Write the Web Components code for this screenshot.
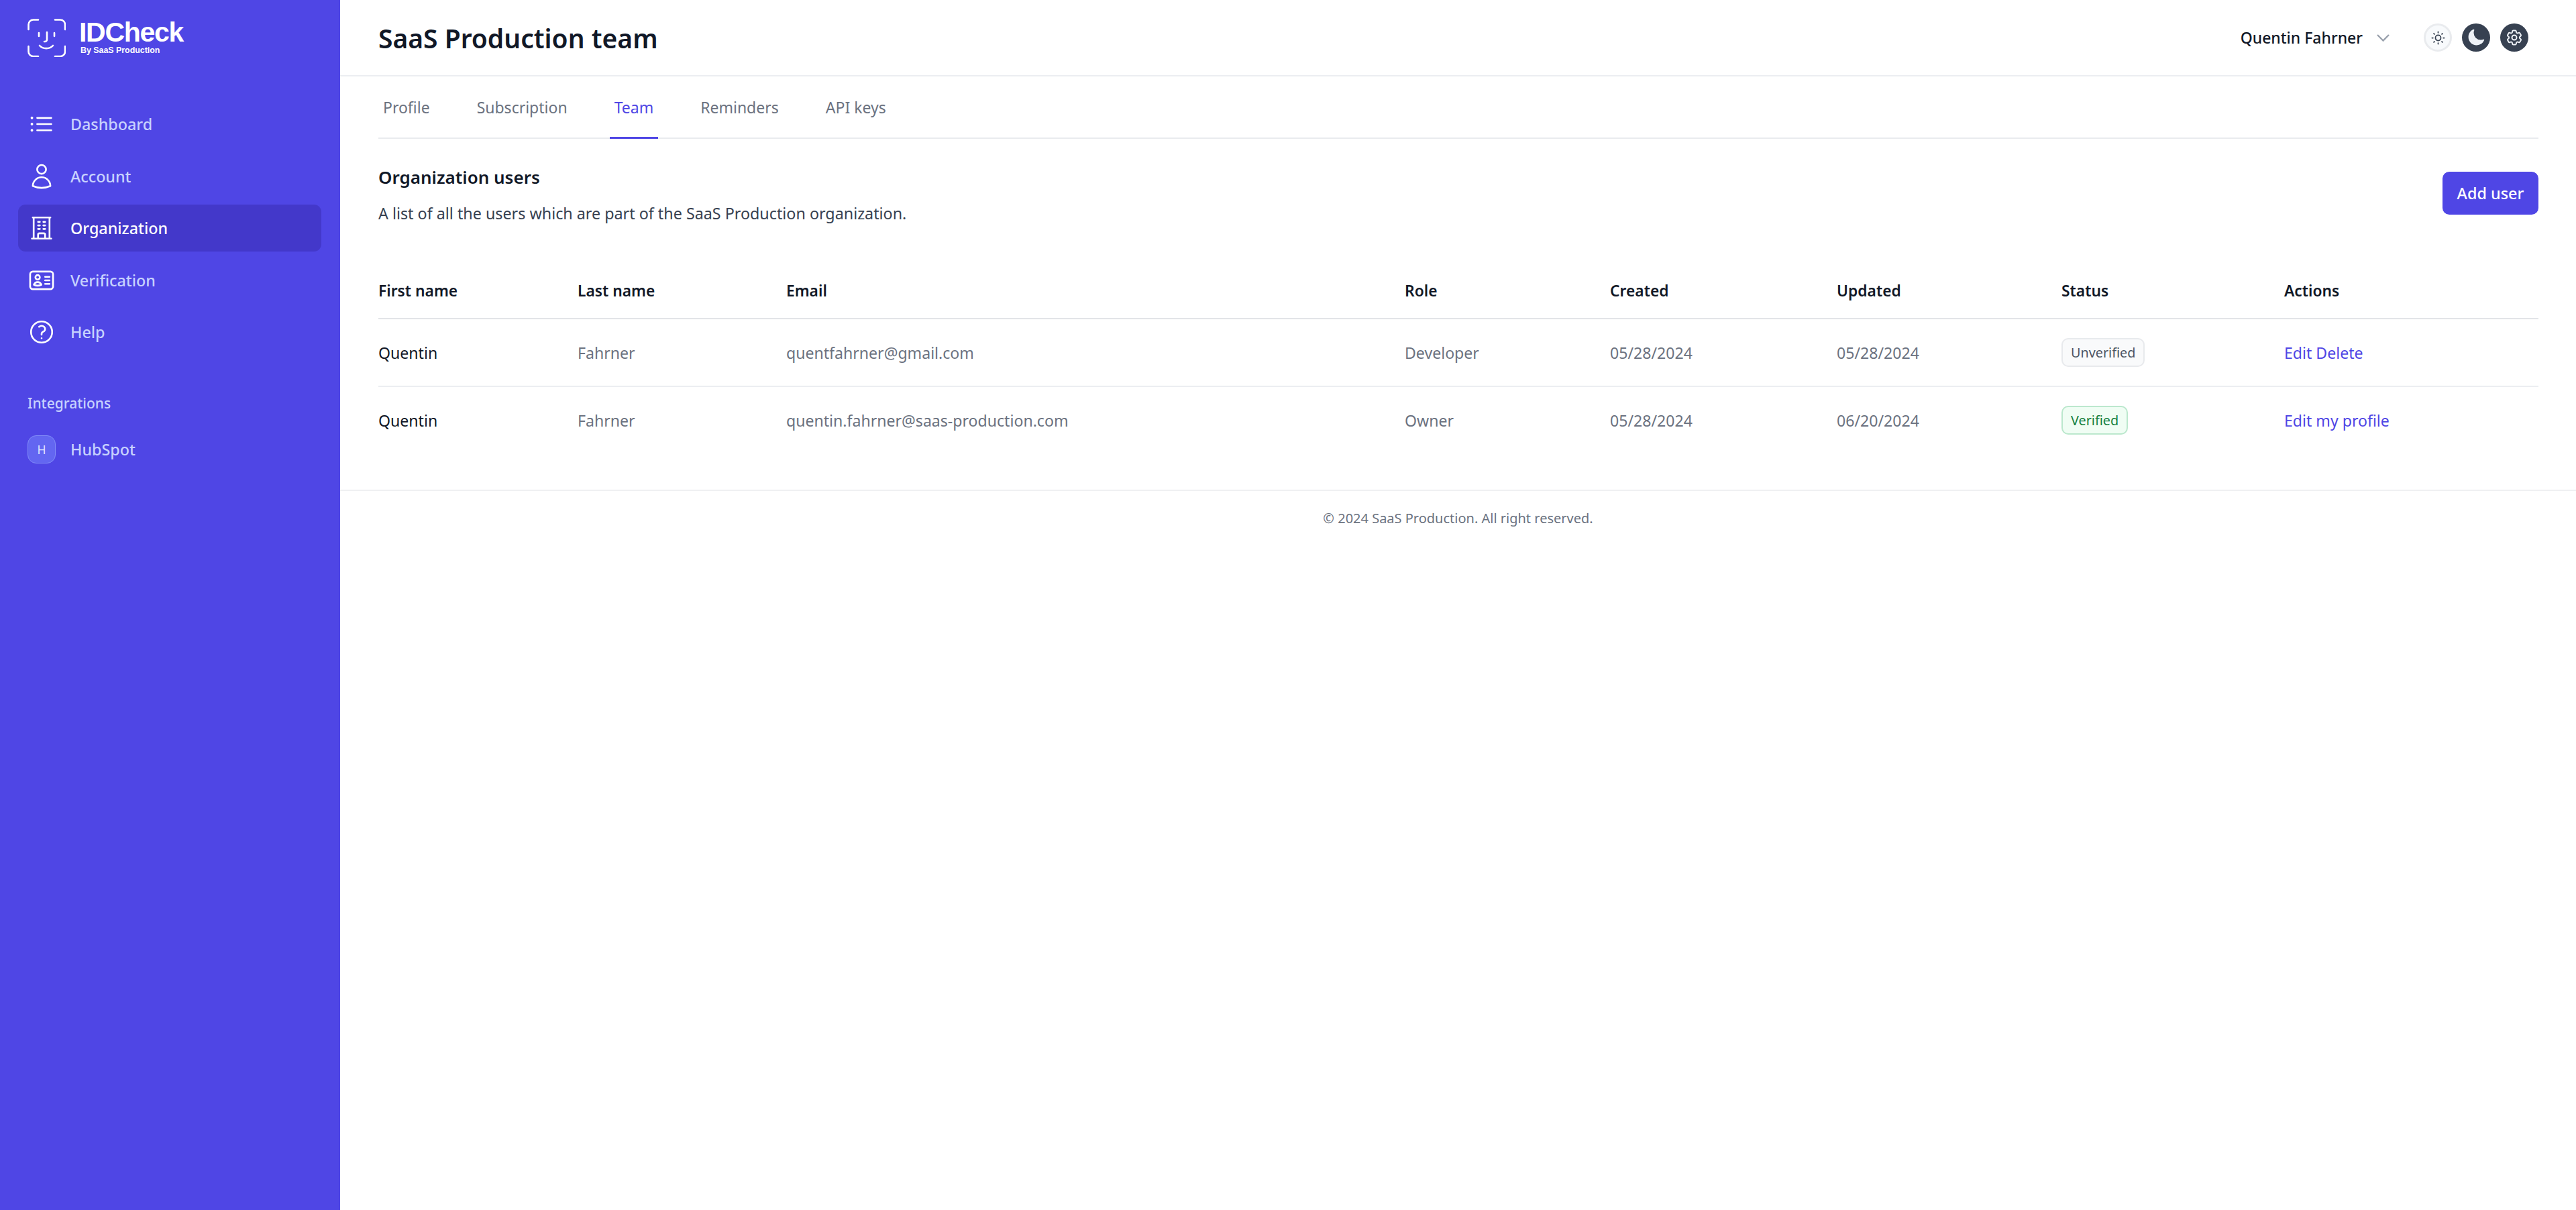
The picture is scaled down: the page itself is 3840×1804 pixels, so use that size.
<!DOCTYPE html>
<html lang="en">
<head>
<meta charset="utf-8">
<title>IDCheck - SaaS Production team</title>
<style>
  html, body { margin: 0; height: 100%; background: #fff; }
  body { font-family: "Noto Sans", "Open Sans", sans-serif; }
</style>
</head>
<body>
<id-app>
  <id-sidebar slot="sidebar"></id-sidebar>
  <id-topbar slot="main" heading="SaaS Production team" user="Quentin Fahrner"></id-topbar>
  <tab-bar slot="main" tabs="Profile,Subscription,Team,Reminders,API keys" active="Team"></tab-bar>
  <section-head slot="main" heading="Organization users" text="A list of all the users which are part of the SaaS Production organization." action="Add user"></section-head>
  <users-table slot="main">
    <user-row first="Quentin" last="Fahrner" email="quentfahrner@gmail.com" role="Developer" created="05/28/2024" updated="05/28/2024" status="Unverified" links="Edit Delete"></user-row>
    <user-row first="Quentin" last="Fahrner" email="quentin.fahrner@saas-production.com" role="Owner" created="05/28/2024" updated="06/20/2024" status="Verified" links="Edit my profile"></user-row>
  </users-table>
  <page-footer slot="main">© 2024 SaaS Production. All right reserved.</page-footer>
</id-app>

<script>
const ICONS = {
  list: 'M8.25 6.75h12M8.25 12h12m-12 5.25h12M3.75 6.75h.007v.008H3.75V6.75zm.375 0a.375.375 0 11-.75 0 .375.375 0 01.75 0zM3.75 12h.007v.008H3.75V12zm.375 0a.375.375 0 11-.75 0 .375.375 0 01.75 0zm-.375 5.25h.007v.008H3.75v-.008zm.375 0a.375.375 0 11-.75 0 .375.375 0 01.75 0z',
  user: 'M15.75 6a3.75 3.75 0 11-7.5 0 3.75 3.75 0 017.5 0zM4.501 20.118a7.5 7.5 0 0114.998 0A17.933 17.933 0 0112 21.75c-2.676 0-5.216-.584-7.499-1.632z',
  building: 'M3.75 21h16.5M4.5 3h15M5.25 3v18m13.5-18v18M9 6.75h1.5m-1.5 3h1.5m-1.5 3h1.5m3-6H15m-1.5 3H15m-1.5 3H15M9 21v-3.375c0-.621.504-1.125 1.125-1.125h3.75c.621 0 1.125.504 1.125 1.125V21',
  card: 'M15 9h3.75M15 12h3.75M15 15h3.75M4.5 19.5h15a2.25 2.25 0 002.25-2.25V6.75A2.25 2.25 0 0019.5 4.5h-15a2.25 2.25 0 00-2.25 2.25v10.5A2.25 2.25 0 004.5 19.5zm6-10.125a1.875 1.875 0 11-3.75 0 1.875 1.875 0 013.75 0zm1.294 6.336a6.721 6.721 0 01-3.17.789 6.721 6.721 0 01-3.168-.789 3.376 3.376 0 016.338 0z',
  help: 'M9.879 7.519c1.171-1.025 3.071-1.025 4.242 0 1.172 1.025 1.172 2.687 0 3.712-.203.179-.43.326-.67.442-.745.361-1.45.999-1.45 1.827v.75M21 12a9 9 0 11-18 0 9 9 0 0118 0zm-9 5.25h.008v.008H12v-.008z',
  gear: 'M9.594 3.94c.09-.542.56-.94 1.11-.94h2.593c.55 0 1.02.398 1.11.94l.213 1.281c.063.374.313.686.645.87.074.04.147.083.22.127.324.196.72.257 1.075.124l1.217-.456a1.125 1.125 0 011.37.49l1.296 2.247a1.125 1.125 0 01-.26 1.431l-1.003.827c-.293.24-.438.613-.431.992a6.759 6.759 0 010 .255c-.007.378.138.75.43.99l1.005.828c.424.35.534.954.26 1.43l-1.298 2.247a1.125 1.125 0 01-1.369.491l-1.217-.456c-.355-.133-.75-.072-1.076.124a6.57 6.57 0 01-.22.128c-.331.183-.581.495-.644.869l-.213 1.28c-.09.543-.56.941-1.11.941h-2.594c-.55 0-1.02-.398-1.11-.94l-.213-1.281c-.062-.374-.312-.686-.644-.87a6.52 6.52 0 01-.22-.127c-.325-.196-.72-.257-1.076-.124l-1.217.456a1.125 1.125 0 01-1.369-.49l-1.297-2.247a1.125 1.125 0 01.26-1.431l1.004-.827c.292-.24.437-.613.43-.992a6.932 6.932 0 010-.255c.007-.378-.138-.75-.43-.99l-1.004-.828a1.125 1.125 0 01-.26-1.43l1.297-2.247a1.125 1.125 0 011.37-.491l1.216.456c.356.133.751.072 1.076-.124.072-.044.146-.087.22-.128.332-.183.582-.495.644-.869l.214-1.281zM15 12a3 3 0 11-6 0 3 3 0 016 0z',
  moon: 'M9.528 1.718a.75.75 0 01.162.819A8.97 8.97 0 009 6a9 9 0 009 9 8.97 8.97 0 003.463-.69.75.75 0 01.981.98 10.503 10.503 0 01-9.694 6.46c-5.799 0-10.5-4.701-10.5-10.5 0-4.368 2.667-8.112 6.46-9.694a.75.75 0 01.818.162z',
  sun: 'M12 1.6v1.6M12 20.8v1.6M1.6 12h1.6M20.8 12h1.6M4.6 4.6l1.1 1.1M18.3 18.3l1.1 1.1M4.6 19.4l1.1-1.1M18.3 5.7l1.1-1.1M16.6 12a4.6 4.6 0 11-9.2 0 4.6 4.6 0 019.2 0z'
};

class SvgIcon extends HTMLElement {
  connectedCallback() {
    const size = this.getAttribute('size') || 42;
    const stroke = this.getAttribute('stroke') || 1.5;
    const name = this.getAttribute('name');
    const solid = this.hasAttribute('solid');
    this.attachShadow({ mode: 'open' }).innerHTML = `
      <style>:host { display: inline-flex; flex: none; } svg { display: block; }</style>
      <svg width="${size}" height="${size}" viewBox="0 0 24 24" fill="${solid ? 'currentColor' : 'none'}" stroke="${solid ? 'none' : 'currentColor'}" stroke-width="${stroke}" stroke-linecap="round" stroke-linejoin="round"><path d="${ICONS[name]}"/></svg>`;
  }
}
customElements.define('svg-icon', SvgIcon);

class IdApp extends HTMLElement {
  constructor() {
    super();
    this.attachShadow({ mode: 'open' }).innerHTML = `
      <style>
        :host { display: flex; min-height: 1804px; }
        .side { width: 507px; flex: none; display: flex; }
        .main { flex: 1; min-width: 0; display: flex; flex-direction: column; }
      </style>
      <div class="side"><slot name="sidebar"></slot></div>
      <div class="main"><slot name="main"></slot></div>`;
  }
}
customElements.define('id-app', IdApp);

class IdLogo extends HTMLElement {
  constructor() {
    super();
    this.attachShadow({ mode: 'open' }).innerHTML = `
      <style>
        :host { display: flex; align-items: flex-start; gap: 20px; color: #fff; font-family: "Liberation Sans", sans-serif; }
        svg { display: block; flex: none; }
        .name { font-size: 41px; line-height: 40px; font-weight: 700; letter-spacing: -1.3px; }
        .by { font-size: 12.4px; line-height: 15px; font-weight: 700; padding-left: 2px; }
      </style>
      <svg width="57" height="57" viewBox="0 0 57 57" fill="none" stroke="#fff" stroke-width="2.6" stroke-linecap="round" stroke-linejoin="round">
        <path d="M1.5 16V8.500a7 7 0 017-7H16M41 1.500h8a7 7 0 017 7V16M1.500 41v8a7 7 0 007 7H16M41 56h8a7 7 0 007-7v-8"/>
        <path d="M17 21v5M40 21v5M29 20v11a3 3 0 01-3 3h-1M18 40c5 5.500 15 5.500 20 0"/>
      </svg>
      <div>
        <div class="name">IDCheck</div>
        <div class="by">By SaaS Production</div>
      </div>`;
  }
}
customElements.define('id-logo', IdLogo);

class NavItem extends HTMLElement {
  connectedCallback() {
    const icon = this.getAttribute('icon');
    const letter = this.getAttribute('letter');
    const active = this.hasAttribute('active');
    this.attachShadow({ mode: 'open' }).innerHTML = `
      <style>
        :host { display: flex; align-items: center; gap: 22px; height: 70px; padding: 0 14px; border-radius: 11px;
          font-size: 23.3px; font-weight: 500; color: ${active ? '#fff' : '#c7d2fe'}; background: ${active ? '#4338ca' : 'transparent'}; }
        svg-icon { color: #fff; }
        .letter { width: 42px; height: 42px; box-sizing: border-box; flex: none; display: flex; align-items: center; justify-content: center;
          border: 1.5px solid #818cf8; border-radius: 13px; background: #6366f1; color: #e0e7ff; font-size: 17.6px; font-weight: 400; }
      </style>
      ${letter ? `<span class="letter">${letter}</span>` : `<svg-icon name="${icon}"></svg-icon>`}
      <span><slot></slot></span>`;
  }
}
customElements.define('nav-item', NavItem);

class IdSidebar extends HTMLElement {
  constructor() {
    super();
    this.attachShadow({ mode: 'open' }).innerHTML = `
      <style>
        :host { display: flex; flex-direction: column; flex: 1; background: #4f46e5; }
        id-logo { margin: 28px 0 0 41px; }
        nav { display: flex; flex-direction: column; gap: 7.5px; margin: 65px 28px 0 27px; }
        h3 { margin: 55px 0 0 41px; font-size: 21px; line-height: 32px; font-weight: 500; color: #c7d2fe; }
        .integrations { margin: 18px 28px 0 27px; }
      </style>
      <id-logo></id-logo>
      <nav>
        <nav-item icon="list">Dashboard</nav-item>
        <nav-item icon="user">Account</nav-item>
        <nav-item icon="building" active>Organization</nav-item>
        <nav-item icon="card">Verification</nav-item>
        <nav-item icon="help">Help</nav-item>
      </nav>
      <h3>Integrations</h3>
      <div class="integrations"><nav-item letter="H">HubSpot</nav-item></div>`;
  }
}
customElements.define('id-sidebar', IdSidebar);

class IdTopbar extends HTMLElement {
  connectedCallback() {
    this.attachShadow({ mode: 'open' }).innerHTML = `
      <style>
        :host { display: flex; align-items: center; height: 112px; padding: 0 71px 0 57px; border-bottom: 2px solid #eceef1; }
        h1 { flex: 1; margin: 0; font-size: 39px; font-weight: 600; color: #111827; }
        .user { font-size: 23px; font-weight: 500; color: #111827; }
        svg.chev { margin: 0 51px 0 21px; display: block; }
        .btns { display: flex; gap: 15px; }
        .round { width: 42px; height: 42px; box-sizing: border-box; border-radius: 50%; display: flex; align-items: center; justify-content: center; background: #374151; color: #eef2f7; }
        .round.light { background: #f8fafc; border: 3px solid #e9ebee; color: #374151; }
      </style>
      <h1>${this.getAttribute('heading')}</h1>
      <span class="user">${this.getAttribute('user')}</span>
      <svg class="chev" width="19" height="13" viewBox="0 0 19 13" fill="none" stroke="#9ca3af" stroke-width="2.4"><path d="M1 2l8.500 8.500L18 2"/></svg>
      <div class="btns">
        <span class="round light"><svg-icon name="sun" size="21" stroke="2"></svg-icon></span>
        <span class="round"><svg-icon name="moon" size="28" solid></svg-icon></span>
        <span class="round"><svg-icon name="gear" size="28" stroke="1.7"></svg-icon></span>
      </div>`;
  }
}
customElements.define('id-topbar', IdTopbar);

class TabBar extends HTMLElement {
  connectedCallback() {
    const active = this.getAttribute('active');
    const tabs = this.getAttribute('tabs').split(',');
    this.attachShadow({ mode: 'open' }).innerHTML = `
      <style>
        :host { display: flex; gap: 56px; margin: 0 56px 0 57px; border-bottom: 2px solid #e9ebee; height: 91px; }
        a { box-sizing: border-box; height: 93px; padding: 25px 7px 0; font-size: 23px; line-height: 42px; font-weight: 400; color: #6b7280; }
        a:first-child { padding-left: 8px; }
        a.on { color: #4f46e5; border-bottom: 3px solid #4f46e5; }
      </style>
      ${tabs.map(t => `<a class="${t === active ? 'on' : ''}">${t}</a>`).join('')}`;
  }
}
customElements.define('tab-bar', TabBar);

class SectionHead extends HTMLElement {
  connectedCallback() {
    this.attachShadow({ mode: 'open' }).innerHTML = `
      <style>
        :host { display: flex; justify-content: space-between; align-items: flex-start; margin: 34px 56px 0 57px; }
        h2 { margin: 0; font-size: 26px; line-height: 46px; font-weight: 600; color: #111827; }
        p { margin: 10px 0 0; font-size: 23.3px; line-height: 42px; color: #374151; }
        button { margin-top: 15px; width: 143px; height: 64px; border: 0; border-radius: 10px; background: #4f46e5; color: #fff;
          font: 500 23.4px "Noto Sans", sans-serif; }
      </style>
      <div><h2>${this.getAttribute('heading')}</h2><p>${this.getAttribute('text')}</p></div>
      <button>${this.getAttribute('action')}</button>`;
  }
}
customElements.define('section-head', SectionHead);

const COLUMNS = '297px 311px 922px 306px 338px 335px 332px 1fr';

class UsersTable extends HTMLElement {
  constructor() {
    super();
    const heads = ['First name', 'Last name', 'Email', 'Role', 'Created', 'Updated', 'Status', 'Actions'];
    this.attachShadow({ mode: 'open' }).innerHTML = `
      <style>
        :host { display: block; margin: 53px 56px 0 57px; }
        .head { display: grid; grid-template-columns: ${COLUMNS}; align-items: center; height: 82px; border-bottom: 2px solid #e2e4e8;
          font-size: 22.8px; font-weight: 600; color: #111827; }
      </style>
      <div class="head">${heads.map(h => `<span>${h}</span>`).join('')}</div>
      <slot></slot>`;
  }
}
customElements.define('users-table', UsersTable);

class StatusBadge extends HTMLElement {
  connectedCallback() {
    const ok = this.getAttribute('kind') === 'Verified';
    this.attachShadow({ mode: 'open' }).innerHTML = `
      <style>
        :host { display: inline-flex; align-items: center; box-sizing: border-box; height: 43px; padding: 0 12px; border-radius: 10px;
          font-size: 19.8px; font-weight: 400;
          border: 2px solid ${ok ? '#bbe8cd' : '#e8eaed'}; background: ${ok ? '#f0fdf4' : '#f9fafb'}; color: ${ok ? '#15803d' : '#4b5563'}; }
      </style>
      <slot></slot>`;
  }
}
customElements.define('status-badge', StatusBadge);

class UserRow extends HTMLElement {
  connectedCallback() {
    const a = n => this.getAttribute(n);
    this.attachShadow({ mode: 'open' }).innerHTML = `
      <style>
        :host { display: grid; grid-template-columns: ${COLUMNS}; align-items: center; height: 99px; font-size: 23.1px; color: #6b7280; }
        :host(:not(:last-child)) { border-bottom: 2px solid #eceef1; }
        .name { color: #111827; }
        .link { color: #4f46e5; }
      </style>
      <span class="name">${a('first')}</span>
      <span>${a('last')}</span>
      <span>${a('email')}</span>
      <span>${a('role')}</span>
      <span>${a('created')}</span>
      <span>${a('updated')}</span>
      <span><status-badge kind="${a('status')}">${a('status')}</status-badge></span>
      <span class="link">${a('links')}</span>`;
  }
}
customElements.define('user-row', UserRow);

class PageFooter extends HTMLElement {
  constructor() {
    super();
    this.attachShadow({ mode: 'open' }).innerHTML = `
      <style>
        :host { display: block; margin-top: 54px; padding-top: 20px; border-top: 2px solid #eff0f2; text-align: center;
          font-size: 20px; line-height: 42px; color: #6b7280; }
      </style>
      <slot></slot>`;
  }
}
customElements.define('page-footer', PageFooter);
</script>
</body>
</html>
